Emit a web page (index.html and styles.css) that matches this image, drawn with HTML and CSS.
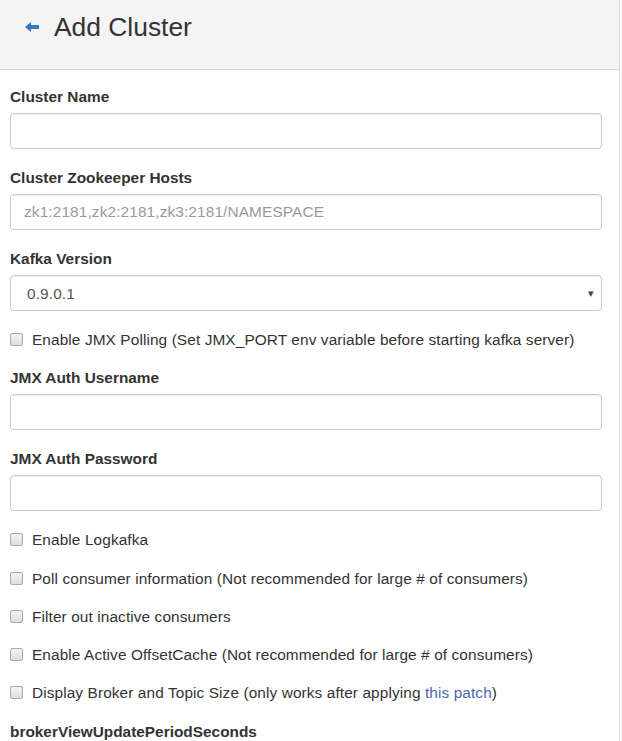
FILE: index.html
```html
<!DOCTYPE html>
<html>

<head>
    <meta charset='utf-8'>
    <title>Add Cluster</title>
    <link rel="stylesheet" href="styles.css">
</head>

<body>
    <div class="panel">
        <div class="panel_heading">
            <a href="#" class="back">
                <svg width="14" height="10" viewBox="0 0 14 10">
                    <path d="M0 5 L6 0 L6 3 L14 3 L14 7 L6 7 L6 10 Z" fill="#337ab7" />
                </svg>
            </a>
            <h3>Add Cluster</h3>
        </div>
        <form class="panel_body">
            <div class="form_group">
                <label for="name">Cluster Name</label>
                <input type="text" id="name">
            </div>
            <div class="form_group">
                <label for="zk">Cluster Zookeeper Hosts</label>
                <input type="text" id="zk" placeholder="zk1:2181,zk2:2181,zk3:2181/NAMESPACE">
            </div>
            <div class="form_group">
                <label for="ver">Kafka Version</label>
                <div class="select_box">
                    <select id="ver">
                        <option>0.9.0.1</option>
                    </select>
                    <span class="caret">&#9662;</span>
                </div>
            </div>
            <div class="checkbox"><span class="box"></span>Enable JMX Polling (Set JMX_PORT env variable before starting kafka server)</div>
            <div class="form_group">
                <label for="juser">JMX Auth Username</label>
                <input type="text" id="juser">
            </div>
            <div class="form_group">
                <label for="jpass">JMX Auth Password</label>
                <input type="password" id="jpass">
            </div>
            <div class="checkbox"><span class="box"></span>Enable Logkafka</div>
            <div class="checkbox"><span class="box"></span>Poll consumer information (Not recommended for large # of consumers)</div>
            <div class="checkbox"><span class="box"></span>Filter out inactive consumers</div>
            <div class="checkbox"><span class="box"></span>Enable Active OffsetCache (Not recommended for large # of consumers)</div>
            <div class="checkbox"><span class="box"></span>Display Broker and Topic Size (only works after applying <a href="#">this patch</a>)</div>
            <div class="form_group last">
                <label for="bvu">brokerViewUpdatePeriodSeconds</label>
                <input type="text" id="bvu">
            </div>
        </form>
    </div>
</body>

</html>
```

FILE: styles.css
```css
* {
    margin: 0;
    padding: 0;
    box-sizing: border-box;
}

body {
    font-family: "Liberation Sans", Arial, sans-serif;
    font-size: 15.4px;
    line-height: 22px;
    color: #333;
    background-color: white;
}

.panel {
    width: 620px;
    border-right: 1px solid #ddd;
    min-height: 741px;
}

.panel_heading {
    height: 70px;
    background-color: #f4f4f4;
    border-bottom: 1px solid #ddd;
    display: flex;
    align-items: flex-start;
    padding: 12px 0 0 25px;
}

.back {
    display: block;
    margin-top: 10px;
    margin-right: 15px;
    line-height: 0;
}

h3 {
    font-size: 26.4px;
    font-weight: normal;
    line-height: 30px;
}

.panel_body {
    padding: 16px 17px 0 10px;
}

.form_group {
    margin-bottom: 18px;
}

.form_group.last {
    margin-top: 1.5px;
}

label {
    display: block;
    font-weight: bold;
    margin-bottom: 5px;
}

input,
select {
    display: block;
    width: 100%;
    height: 36px;
    padding: 6px 13px;
    font-family: inherit;
    font-size: 15.4px;
    letter-spacing: 0.12px;
    color: #555;
    border: 1px solid #ccc;
    border-radius: 4px;
    box-shadow: inset 0 1px 1px rgba(0, 0, 0, .075);
    outline: none;
    background-color: white;
}

input::placeholder {
    color: #999;
}

.select_box {
    position: relative;
}

select {
    appearance: none;
    -webkit-appearance: none;
    padding-left: 16px;
}

.caret {
    position: absolute;
    right: 8px;
    top: 7px;
    font-size: 11px;
    color: #444;
    pointer-events: none;
}

.checkbox {
    height: 22px;
    margin-bottom: 16.3px;
    letter-spacing: 0.1px;
}

.box {
    display: inline-block;
    vertical-align: -1px;
    width: 13px;
    height: 13px;
    margin-right: 9px;
    border: 1px solid #a9a9a9;
    border-radius: 2px;
    background: linear-gradient(#f4f4f4, #dedede);
}

a {
    color: #4a69ae;
    text-decoration: none;
}
```
